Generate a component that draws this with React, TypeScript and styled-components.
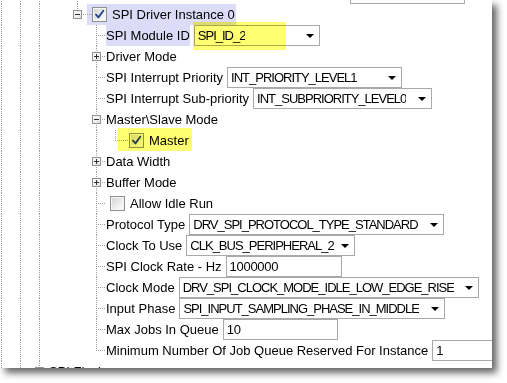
import React from 'react';
import styled, { createGlobalStyle, css } from 'styled-components';

const DOT = '#a0a0a0';
const LAV = '#dcdcf8';
const vLine = `repeating-linear-gradient(to bottom, ${DOT} 0 1px, transparent 1px 2px)`;
const hLine = `repeating-linear-gradient(to right, ${DOT} 0 1px, transparent 1px 2px)`;

const Global = createGlobalStyle`
  html, body { margin: 0; padding: 0; background: #fff; }
  body { font-family: "Liberation Sans", Arial, sans-serif; }
`;

const Page = styled.div`
  width: 507px;
  height: 383px;
  background: #fff;
`;

const Window = styled.div`
  width: 492px;
  height: 368px;
  background: #fff;
  overflow: hidden;
  box-shadow: 5px 5px 7px rgba(0, 0, 0, 0.6);
`;

const Tree = styled.div`
  margin: -17px 0 0 -8px;
  display: flex;
  flex-direction: column;
  font: 13px "Liberation Sans", Arial, sans-serif;
  color: #000;
`;

const Row = styled.div`
  display: flex;
  align-items: center;
  height: 21px;
  flex: none;
  white-space: nowrap;
`;

type GuideKind = 'none' | 'line' | 'tee' | 'ell';

const Guide = styled.span<{ $kind: GuideKind }>`
  flex: none;
  width: 19px;
  align-self: stretch;
  box-sizing: border-box;
  display: flex;
  align-items: flex-start;
  padding: 6px 0 0 5px;
  background-repeat: no-repeat;
  ${({ $kind }) =>
    $kind === 'line' &&
    css`
      background-image: ${vLine};
      background-size: 1px 100%;
      background-position: 9px 0;
    `}
  ${({ $kind }) =>
    $kind === 'tee' &&
    css`
      background-image: ${vLine}, ${hLine};
      background-size: 1px 100%, 10px 1px;
      background-position: 9px 0, 9px 10px;
    `}
  ${({ $kind }) =>
    $kind === 'ell' &&
    css`
      background-image: ${vLine}, ${hLine};
      background-size: 1px 11px, 10px 1px;
      background-position: 9px 0, 9px 10px;
    `}
`;

const ExpanderBox = styled.span`
  flex: none;
  width: 9px;
  height: 9px;
  box-sizing: border-box;
  border: 1px solid #919191;
  background: linear-gradient(135deg, #ffffff 0%, #e4e4e4 100%);
  display: flex;
`;

const Expander = ({ open }: { open: boolean }) => (
  <ExpanderBox>
    <svg width="7" height="7" viewBox="0 0 7 7">
      <path
        d={open ? 'M1 3.5H6' : 'M1 3.5H6M3.5 1V6'}
        stroke="#2e2e3a"
        strokeWidth="1"
        shapeRendering="crispEdges"
      />
    </svg>
  </ExpanderBox>
);

const Stub = styled.span<{ $w: number }>`
  flex: none;
  width: ${(p) => p.$w}px;
  align-self: stretch;
  background: ${hLine} no-repeat 0 10px / 100% 1px;
`;

const CheckBox = styled.span<{ $ml?: number }>`
  flex: none;
  width: 15px;
  height: 15px;
  box-sizing: border-box;
  margin-left: ${(p) => p.$ml ?? 0}px;
  border: 1px solid #8e8f8f;
  background: linear-gradient(135deg, #d2d2d2 0%, #ececec 55%, #ffffff 100%);
  box-shadow: inset 0 0 0 1px #f6f6f6;
  display: flex;
  align-items: center;
  justify-content: center;
`;

const Check = ({ on, ml }: { on?: boolean; ml?: number }) => (
  <CheckBox $ml={ml}>
    {on && (
      <svg width="11" height="11" viewBox="0 0 11 11">
        <path
          d="M2 5.6 L4.4 8.4 L9.3 1.8"
          fill="none"
          stroke="#25458a"
          strokeWidth="1.9"
          strokeLinecap="round"
          strokeLinejoin="round"
        />
      </svg>
    )}
  </CheckBox>
);

const Label = styled.span<{ $sel?: boolean; $ml?: number; $w?: number }>`
  flex: none;
  align-self: stretch;
  display: flex;
  align-items: center;
  margin-left: ${(p) => p.$ml ?? 0}px;
  ${(p) => p.$w && css`width: ${p.$w}px; overflow: hidden;`}
  ${(p) => p.$sel && css`background: ${LAV};`}
`;

const Selected = styled.span`
  flex: none;
  align-self: stretch;
  display: flex;
  align-items: center;
  background: ${LAV};
  padding-right: 1px;
`;

const Mark = styled.span<{ $inset: string; $ml?: number }>`
  position: relative;
  flex: none;
  align-self: stretch;
  display: flex;
  align-items: center;
  margin-left: ${(p) => p.$ml ?? 0}px;
  &::after {
    content: '';
    position: absolute;
    inset: ${(p) => p.$inset};
    background: #ffff72;
    mix-blend-mode: multiply;
    pointer-events: none;
  }
`;

const Field = styled.span<{ $w: number; $ml?: number }>`
  flex: none;
  box-sizing: border-box;
  width: ${(p) => p.$w}px;
  height: 21px;
  margin-left: ${(p) => p.$ml ?? 4}px;
  border: 1px solid #a9a9a9;
  background: #fff;
  padding: 0 5px 0 3px;
  display: flex;
  align-items: center;
  justify-content: space-between;
  overflow: hidden;
`;

const FieldText = styled.span<{ $tight?: boolean }>`
  white-space: nowrap;
  overflow: hidden;
  letter-spacing: ${(p) => (p.$tight ? '-1px' : '-0.3px')};
`;

const Arrow = styled.span`
  flex: none;
  width: 0;
  height: 0;
  margin-left: 4px;
  border-left: 4px solid transparent;
  border-right: 4px solid transparent;
  border-top: 4px solid #000;
`;

const Select = ({ w, value, ml }: { w: number; value: string; ml?: number }) => (
  <Field $w={w} $ml={ml}>
    <FieldText $tight>{value}</FieldText>
    <Arrow />
  </Field>
);

const TextBox = ({ w, value }: { w: number; value: string }) => (
  <Field $w={w}>
    <FieldText>{value}</FieldText>
  </Field>
);

const Guides = ({ kinds, expander }: { kinds: GuideKind[]; expander?: 'open' | 'closed' }) => (
  <>
    {kinds.map((k, i) => (
      <Guide key={i} $kind={k}>
        {i === kinds.length - 1 && expander && <Expander open={expander === 'open'} />}
      </Guide>
    ))}
  </>
);

const BASE: GuideKind[] = ['line', 'line', 'line', 'none', 'none'];
const CHILD: GuideKind[] = [...BASE, 'tee'];

export default function App() {
  return (
    <Page>
      <Global />
      <Window>
        <Tree>
          <Row>
            <Guides kinds={['line', 'line', 'line', 'none', 'tee']} />
            <Label $w={259}>Number of SPI Driver Instances</Label>
            <TextBox w={115} value="1" />
          </Row>
          <Row>
            <Guides kinds={['line', 'line', 'line', 'none', 'ell']} expander="open" />
            <Selected>
              <Stub $w={5} />
              <Check on />
              <Label $ml={5}>SPI Driver Instance 0</Label>
            </Selected>
          </Row>
          <Row>
            <Guides kinds={CHILD} />
            <Label $sel>SPI Module ID</Label>
            <Mark $inset="-3px 34px -4px -1px" $ml={4}>
              <Select w={126} value="SPI_ID_2" ml={0} />
            </Mark>
          </Row>
          <Row>
            <Guides kinds={CHILD} expander="closed" />
            <Label>Driver Mode</Label>
          </Row>
          <Row>
            <Guides kinds={CHILD} />
            <Label>SPI Interrupt Priority</Label>
            <Select w={175} value="INT_PRIORITY_LEVEL1" />
          </Row>
          <Row>
            <Guides kinds={CHILD} />
            <Label>SPI Interrupt Sub-priority</Label>
            <Select w={179} value="INT_SUBPRIORITY_LEVEL0" />
          </Row>
          <Row>
            <Guides kinds={CHILD} expander="open" />
            <Label>Master\Slave Mode</Label>
          </Row>
          <Row>
            <Guides kinds={[...BASE, 'line', 'ell']} />
            <Stub $w={4} />
            <Mark $inset="-2px -3px 0 -11px">
              <Check on />
              <Label $ml={5}>Master</Label>
            </Mark>
          </Row>
          <Row>
            <Guides kinds={CHILD} expander="closed" />
            <Label>Data Width</Label>
          </Row>
          <Row>
            <Guides kinds={CHILD} expander="closed" />
            <Label>Buffer Mode</Label>
          </Row>
          <Row>
            <Guides kinds={CHILD} />
            <Check ml={4} />
            <Label $ml={5}>Allow Idle Run</Label>
          </Row>
          <Row>
            <Guides kinds={CHILD} />
            <Label>Protocol Type</Label>
            <Select w={255} value="DRV_SPI_PROTOCOL_TYPE_STANDARD" />
          </Row>
          <Row>
            <Guides kinds={CHILD} />
            <Label>Clock To Use</Label>
            <Select w={169} value="CLK_BUS_PERIPHERAL_2" />
          </Row>
          <Row>
            <Guides kinds={CHILD} />
            <Label>SPI Clock Rate - Hz</Label>
            <TextBox w={116} value="1000000" />
          </Row>
          <Row>
            <Guides kinds={CHILD} />
            <Label>Clock Mode</Label>
            <Select w={300} value="DRV_SPI_CLOCK_MODE_IDLE_LOW_EDGE_RISE" />
          </Row>
          <Row>
            <Guides kinds={CHILD} />
            <Label>Input Phase</Label>
            <Select w={266} value="SPI_INPUT_SAMPLING_PHASE_IN_MIDDLE" />
          </Row>
          <Row>
            <Guides kinds={CHILD} />
            <Label>Max Jobs In Queue</Label>
            <TextBox w={115} value="10" />
          </Row>
          <Row>
            <Guides kinds={[...BASE, 'ell']} />
            <Label>Minimum Number Of Job Queue Reserved For Instance</Label>
            <TextBox w={115} value="1" />
          </Row>
          <Row>
            <Guides kinds={['line', 'line', 'tee']} expander="closed" />
            <Label>SPI Flash</Label>
          </Row>
        </Tree>
      </Window>
    </Page>
  );
}
